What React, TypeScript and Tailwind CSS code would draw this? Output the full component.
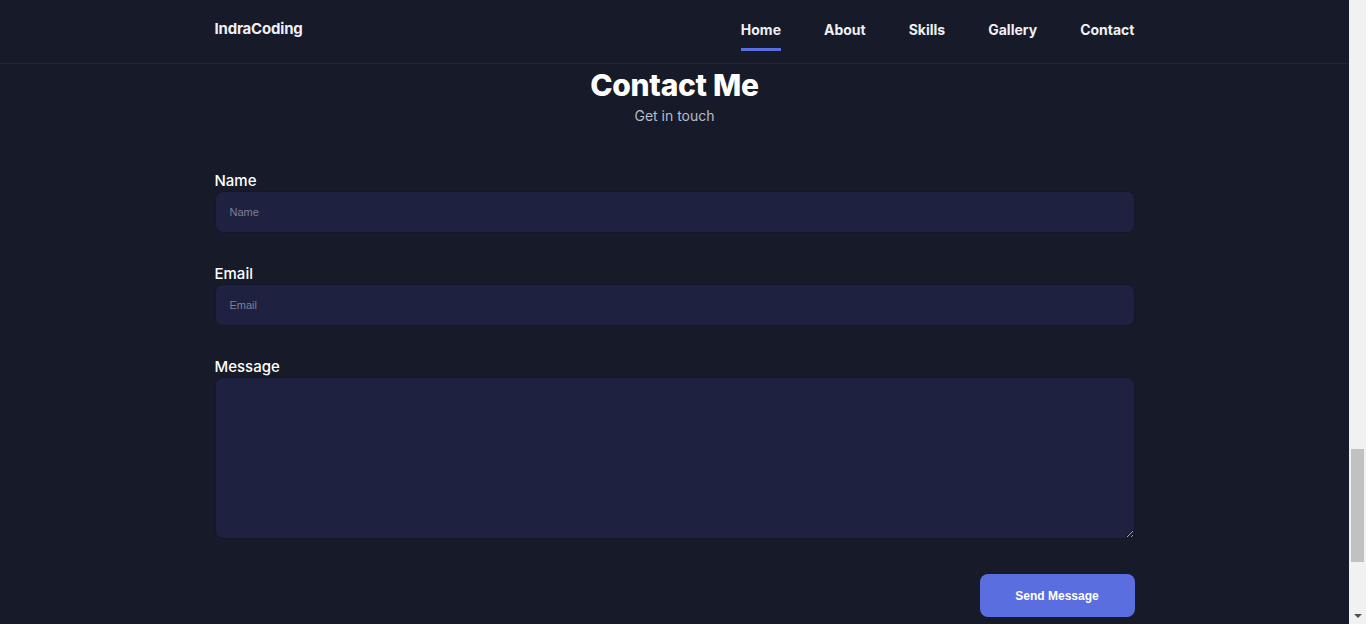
import React from "react";

const navItems = ["Home", "About", "Skills", "Gallery", "Contact"];

const Field = ({ label, placeholder }: { label: string; placeholder: string }) => (
  <div className="flex flex-col">
    <label className="text-[15px] font-medium text-white leading-[20px]">{label}</label>
    <input
      placeholder={placeholder}
      className="h-[42px] w-full rounded-lg border border-[#14172a] bg-[#1e2140] px-[14px] text-[11px] text-white placeholder:text-[#7d8094] outline-none [font-family:'Liberation_Sans',Arial,sans-serif]"
    />
  </div>
);

const App = () => {
  return (
    <div className="flex h-[624px] w-[1366px] overflow-hidden bg-[#171a28] [font-family:Inter,'Noto_Sans',sans-serif]">
      <div className="flex flex-1 flex-col">
        <header className="h-[64px] border-b border-[#222536]">
          <div className="mx-auto flex h-[63px] w-[920px] items-center justify-between">
            <span className="pb-[4px] text-[15px] font-bold tracking-[-0.2px] text-[#eef0f5]">IndraCoding</span>
            <nav className="flex h-full items-center gap-[43px]">
              {navItems.map((item, i) => (
                <a
                  key={item}
                  className="relative flex h-full items-center pb-[4px] text-[14px] font-bold text-[#eef0f5]"
                >
                  {item}
                  {i === 0 && <span className="absolute bottom-[12px] left-0 h-[3px] w-full bg-[#5a6ee0]" />}
                </a>
              ))}
            </nav>
          </div>
        </header>

        <section className="mx-auto flex w-[920px] flex-col">
          <h2 className="mt-[1px] text-center text-[30px] font-extrabold leading-[40px] tracking-[-0.3px] text-white">
            Contact Me
          </h2>
          <p className="text-center text-[14px] text-[#b9bccb]">Get in touch</p>

          <form className="mt-[45px] flex flex-col gap-[31px]" onSubmit={(e) => e.preventDefault()}>
            <Field label="Name" placeholder="Name" />
            <Field label="Email" placeholder="Email" />
            <div className="flex flex-col">
              <label className="text-[15px] font-medium text-white leading-[20px]">Message</label>
              <textarea className="h-[162px] w-full rounded-lg border border-[#14172a] bg-[#1e2140] px-[14px] py-[10px] text-[11px] text-white outline-none" />
            </div>
          </form>

          <div className="mt-[35px] flex justify-end">
            <button className="h-[43px] w-[155px] rounded-lg bg-[#5a6ee0] text-[12px] font-bold text-white [font-family:'Liberation_Sans',Arial,sans-serif]">
              Send Message
            </button>
          </div>
        </section>
      </div>

      {/* fake scrollbar */}
      <div className="flex w-[17px] flex-col bg-[#f1f1f1]">
        <div className="h-[17px]" />
        <div className="flex-1 pt-[432px]">
          <div className="mx-[2px] h-[113px] bg-[#c1c1c1]" />
        </div>
        <div className="flex h-[17px] items-center justify-center">
          <div className="h-0 w-0 border-x-[4px] border-t-[4px] border-x-transparent border-t-[#505050]" />
        </div>
      </div>
    </div>
  );
};

export default App;
